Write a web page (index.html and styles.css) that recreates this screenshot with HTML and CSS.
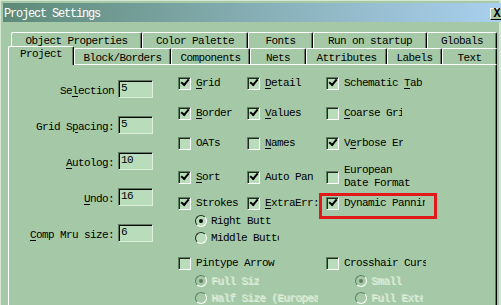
FILE: index.html
```html
<!DOCTYPE html>
<html lang="en">
<head>
    <meta charset="UTF-8">
    <title>Project Settings</title>
    <link rel="stylesheet" href="styles.css">
</head>
<body>

    <div class="window">
        <div class="titlebar">
            <span class="title">Project Settings</span>
            <span class="close">X</span>
        </div>

        <div class="tabs">
            <div class="tab-row back">
                <div class="tab w131">Object Properties</div>
                <div class="tab w106">Color Palette</div>
                <div class="tab w65">Fonts</div>
                <div class="tab w114">Run on startup</div>
                <div class="tab w70">Globals</div>
            </div>
            <div class="tab-row front">
                <div class="tab active w66">Project</div>
                <div class="tab w97">Block/Borders</div>
                <div class="tab w79">Components</div>
                <div class="tab w56">Nets</div>
                <div class="tab w81">Attributes</div>
                <div class="tab w55">Labels</div>
                <div class="tab w55">Text</div>
            </div>
        </div>

        <div class="panel">
            <div class="fields">
                <div class="field-row"><label>Se<u>l</u>ection</label><span class="field">5</span></div>
                <div class="field-row"><label>Grid S<u>p</u>acing:</label><span class="field">5</span></div>
                <div class="field-row"><label><u>A</u>utolog:</label><span class="field">10</span></div>
                <div class="field-row"><label><u>U</u>ndo:</label><span class="field">16</span></div>
                <div class="field-row"><label><u>C</u>omp Mru size:</label><span class="field">6</span></div>
            </div>

            <div class="options">
                <div class="opt-row">
                    <div class="opt"><span class="cb on"></span><span><u>G</u>rid</span></div>
                    <div class="opt"><span class="cb on"></span><span><u>D</u>etail</span></div>
                    <div class="opt"><span class="cb on"></span><span>Schematic <u>T</u>ab</span></div>
                </div>
                <div class="opt-row">
                    <div class="opt"><span class="cb on"></span><span><u>B</u>order</span></div>
                    <div class="opt"><span class="cb on"></span><span><u>V</u>alues</span></div>
                    <div class="opt"><span class="cb"></span><span class="clip w58"><u>C</u>oarse Grid</span></div>
                </div>
                <div class="opt-row">
                    <div class="opt"><span class="cb"></span><span>OATs</span></div>
                    <div class="opt"><span class="cb"></span><span><u>N</u>ames</span></div>
                    <div class="opt"><span class="cb on"></span><span class="clip w59">V<u>e</u>rbose Errors</span></div>
                </div>
                <div class="opt-row">
                    <div class="opt"><span class="cb on"></span><span><u>S</u>ort</span></div>
                    <div class="opt"><span class="cb on"></span><span>Auto Pan</span></div>
                    <div class="opt"><span class="cb"></span><span class="two-line">European<br>Date Format</span></div>
                </div>
                <div class="opt-row">
                    <div class="opt"><span class="cb on"></span><span>Strokes</span></div>
                    <div class="opt"><span class="cb on"></span><span><u>E</u>xtraErr:</span></div>
                    <div class="opt marked"><span class="cb on"></span><span class="clip w81">Dynamic Panning</span></div>
                </div>

                <div class="radio-group">
                    <div class="radio-row"><span class="rb on"></span><span class="clip w60">Right Button</span></div>
                    <div class="radio-row"><span class="rb"></span><span class="clip w68">Middle Button</span></div>
                </div>

                <div class="opt-row wide">
                    <div class="opt"><span class="cb"></span><span>Pintype Arrow</span></div>
                    <div class="opt"><span class="cb"></span><span class="clip w82">Crosshair Cursor</span></div>
                </div>
                <div class="sub-row">
                    <div class="radio-row disabled"><span class="rb on"></span><span class="clip w48">Full Size</span></div>
                    <div class="radio-row disabled"><span class="rb on"></span><span>Small</span></div>
                </div>
                <div class="sub-row">
                    <div class="radio-row disabled"><span class="rb"></span><span class="clip w107">Half Size (European)</span></div>
                    <div class="radio-row disabled"><span class="rb"></span><span class="clip w52">Full Extent</span></div>
                </div>
            </div>
        </div>
    </div>

</body>
</html>
```

FILE: styles.css
```css
:root {
    --face: #a5c9a6;
    --face-light: #b9dcba;
    --hilite: #ffffff;
    --shadow: #5f7f60;
    --dark: #000000;
    --disabled: #cfe5cf;
}

body {
    margin: 0;
    background-color: var(--face);
    font-family: "Liberation Mono", "DejaVu Sans Mono", monospace;
    font-size: 11px;
    letter-spacing: -0.6px;
    color: #000;
}

u {
    text-decoration-thickness: 1px;
    text-underline-offset: 2px;
}

.window {
    width: 501px;
    height: 305px;
    overflow: hidden;
    padding-top: 2px;
    box-sizing: border-box;
    border-top: 1px solid #d3e7d3;
    box-shadow: inset 1px 0 #d3e7d3, inset -2px 0 #d3e7d3;
}

/* title bar */
.titlebar {
    height: 19px;
    margin-left: 3px;
    margin-right: -3px;
    padding-left: 1px;
    display: flex;
    align-items: center;
    justify-content: space-between;
    background: linear-gradient(90deg, #5e8a78 0%, #86aeb4 50%, #a9d0ef 100%);
    color: #fff;
}

.title {
    padding-top: 2px;
    font-size: 12px;
    letter-spacing: -1.2px;
}

.close {
    width: 14px;
    height: 12px;
    box-sizing: border-box;
    margin-top: 2px;
    background-color: var(--face);
    border-top: 1px solid var(--hilite);
    border-left: 1px solid var(--hilite);
    border-right: 1px solid var(--dark);
    border-bottom: 1px solid var(--dark);
    color: #000;
    font-weight: bold;
    font-size: 12px;
    line-height: 10px;
    text-align: center;
    letter-spacing: 0;
}

/* tabs */
.tabs {
    margin: 10px 0 0 8px;
    width: 489px;
}

.tab-row {
    display: flex;
    height: 16px;
}

.tab-row.back {
    margin-left: 3px;
}

.tab-row.front {
    align-items: flex-end;
}

.tab {
    box-sizing: border-box;
    height: 16px;
    flex: none;
    text-align: center;
    white-space: nowrap;
    border-top: 1px solid var(--hilite);
    border-left: 1px solid var(--hilite);
    border-right: 1px solid var(--dark);
    border-radius: 2px 2px 0 0;
    box-shadow: inset -1px 0 var(--shadow);
    background-color: var(--face);
}

.back .tab {
    line-height: 17px;
}

.front .tab {
    padding-top: 2px;
    line-height: 15px;
}

.front .tab.active {
    position: relative;
    z-index: 1;
    height: 19px;
    margin-bottom: -1px;
    padding-top: 0;
}

.w131 { width: 131px; }
.w106 { width: 106px; }
.w65 { width: 65px; }
.w114 { width: 114px; }
.w70 { width: 70px; }
.w66 { width: 66px; }
.w97 { width: 97px; }
.w79 { width: 79px; }
.w56 { width: 56px; }
.w81 { width: 81px; }
.w55 { width: 55px; }

/* page body */
.panel {
    width: 489px;
    height: 250px;
    margin-left: 8px;
    box-sizing: border-box;
    display: flex;
    border-top: 1px solid var(--hilite);
    border-left: 1px solid var(--hilite);
    border-right: 1px solid var(--dark);
    box-shadow: inset -1px 0 var(--shadow);
}

.fields {
    width: 144px;
    padding-top: 15px;
    display: flex;
    flex-direction: column;
    gap: 18px;
}

.field-row {
    height: 18px;
    display: flex;
    align-items: center;
    justify-content: flex-end;
    gap: 4px;
}

.field-row label {
    padding-top: 3px;
}

.field {
    width: 35px;
    height: 18px;
    box-sizing: border-box;
    padding: 1px 0 0 2px;
    line-height: 12px;
    background-color: var(--face-light);
    border-top: 1px solid var(--shadow);
    border-left: 1px solid var(--shadow);
    border-right: 1px solid #dcefdc;
    border-bottom: 1px solid #dcefdc;
    box-shadow: inset 1px 1px var(--dark);
}

.options {
    margin-left: 25px;
    padding-top: 9px;
    flex: 1;
}

.opt-row {
    height: 18px;
    margin-bottom: 12px;
    display: grid;
    grid-template-columns: 69px 79px 1fr;
    align-items: center;
}

.opt-row.wide {
    grid-template-columns: 148px 1fr;
    margin-top: 8px;
    margin-bottom: 0;
}

.opt-row:nth-child(5) {
    margin-bottom: 0;
}

.opt {
    display: flex;
    align-items: center;
    gap: 5px;
    white-space: nowrap;
    line-height: 13px;
}

.marked {
    position: relative;
}

.marked::after {
    content: "";
    position: absolute;
    left: -7px;
    top: -4px;
    width: 112px;
    height: 20px;
    border: 3px solid #e2191b;
}

.clip {
    overflow: hidden;
    white-space: nowrap;
}

.w58 { width: 58px; }
.w59 { width: 59px; }
.w81.clip { width: 81px; }
.w82 { width: 82px; }
.w60 { width: 60px; }
.w68 { width: 68px; }
.w48 { width: 48px; }
.w107 { width: 107px; }
.w52 { width: 52px; }

.two-line {
    line-height: 13px;
}

/* checkbox */
.cb {
    position: relative;
    flex: none;
    width: 13px;
    height: 13px;
    box-sizing: border-box;
    background-color: var(--face-light);
    border-top: 1px solid var(--shadow);
    border-left: 1px solid var(--shadow);
    border-right: 1px solid var(--hilite);
    border-bottom: 1px solid var(--hilite);
    box-shadow: inset 1px 1px #1e2a1e;
}

.cb.on::after {
    content: "";
    position: absolute;
    left: 2px;
    top: 1px;
    width: 6px;
    height: 3px;
    border-left: 2px solid #000;
    border-bottom: 2px solid #000;
    transform: rotate(-50deg);
}

/* radio */
.radio-group {
    padding-left: 17px;
}

.radio-row {
    height: 17px;
    display: flex;
    align-items: center;
    gap: 4px;
    white-space: nowrap;
}

.rb {
    position: relative;
    flex: none;
    width: 12px;
    height: 12px;
    box-sizing: border-box;
    border-radius: 50%;
    background-color: var(--face-light);
    border-top: 1px solid #1e2a1e;
    border-left: 1px solid #1e2a1e;
    border-right: 1px solid var(--hilite);
    border-bottom: 1px solid var(--hilite);
}

.rb.on::after {
    content: "";
    position: absolute;
    left: 3px;
    top: 3px;
    width: 4px;
    height: 4px;
    border-radius: 50%;
    background-color: #000;
}

.sub-row {
    display: grid;
    grid-template-columns: 160px 1fr;
    padding-left: 17px;
}

.disabled {
    color: var(--disabled);
    text-shadow: 1px 1px 0 #e4f2e4;
}

.disabled .rb {
    background-color: var(--face);
    border-top-color: var(--shadow);
    border-left-color: var(--shadow);
}

.disabled .rb.on::after {
    background-color: var(--shadow);
}
```
